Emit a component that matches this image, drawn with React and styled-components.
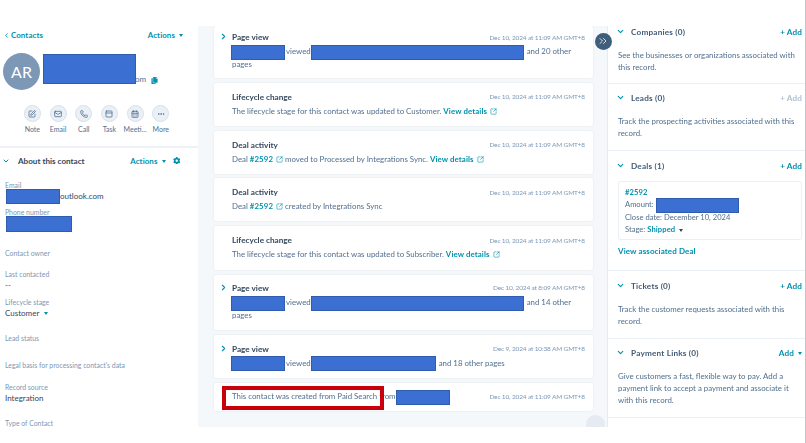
import React from "react";
import styled, { createGlobalStyle } from "styled-components";
import {
  ChevronDown,
  ChevronLeft,
  ChevronRight,
  ChevronsRight,
  SquarePen,
  Mail,
  Phone,
  PanelTop,
  CalendarDays,
  Ellipsis,
  SquareArrowOutUpRight,
} from "lucide-react";
import { FaCog, FaCopy } from "react-icons/fa";

const TEAL = "#0091ae";
const DARK = "#33475b";
const MUTED = "#516f90";
const FONT = `"Lato", "Open Sans", sans-serif`;

const GlobalStyle = createGlobalStyle`
  html, body { margin: 0; padding: 0; background: #fff; }
  body { font-family: ${FONT}; color: ${DARK}; }
  * { box-sizing: border-box; }
`;

const Page = styled.div`
  position: relative;
  width: 806px;
  height: 443px;
  padding-top: 26px;
  overflow: hidden;
  border-right: 1.5px solid #c4c6c9;
  filter: blur(0.4px);
`;

const Columns = styled.div`
  display: grid;
  grid-template-columns: 198px 409px 1fr;
  height: 401px;
  overflow: hidden;
`;

/* redaction boxes sit in the text flow */
const Redact = styled.span`
  display: inline-block;
  width: ${(p) => p.$w}px;
  height: ${(p) => p.$h || 15}px;
  margin: -3px ${(p) => p.$mr ?? 1}px -3px ${(p) => p.$ml ?? 0}px;
  vertical-align: middle;
  background: #3b6fd1;
  border: 1px solid #2f5cae;
`;

const Link = styled.a`
  color: ${TEAL};
  font-weight: 700;
  letter-spacing: 0.1px;
`;

const Caret = styled.span`
  display: inline-block;
  width: 0;
  height: 0;
  margin-left: ${(p) => p.$ml || 4}px;
  vertical-align: middle;
  border-left: 2.5px solid transparent;
  border-right: 2.5px solid transparent;
  border-top: 3px solid ${(p) => p.$color || TEAL};
`;

/* left column */
const Left = styled.aside`
  background: #fff;
  overflow: hidden;
`;

const TopRow = styled.div`
  display: flex;
  justify-content: space-between;
  align-items: center;
  height: 18px;
  padding: 0 15px 0 3px;
  font-size: 7.9px;
`;

const BackLink = styled(Link)`
  display: flex;
  align-items: center;
  gap: 1px;
`;

const Identity = styled.div`
  display: flex;
  align-items: flex-start;
  margin-top: 9px;
  padding-left: 3px;
`;

const Avatar = styled.div`
  display: flex;
  align-items: center;
  justify-content: center;
  width: 37px;
  height: 37px;
  border-radius: 50%;
  background: #7c98b6;
  color: #fff;
  font-size: 16px;
`;

const IdentityText = styled.div`
  display: flex;
  align-items: flex-end;
  height: 31px;
  margin-left: 3px;
  font-size: 8px;
  color: ${MUTED};
  svg { margin-left: 5px; color: ${TEAL}; }
`;

const NameRedact = styled(Redact)`
  width: 93px;
  height: 30px;
  margin: 0 -1px 0 0;
`;

const ActionRow = styled.div`
  display: flex;
  margin-top: 15px;
  padding-left: 19.5px;
  height: 36px;
`;

const ActionItem = styled.div`
  display: flex;
  flex-direction: column;
  align-items: center;
  width: 25.7px;
  font-size: 7px;
  color: ${MUTED};
  white-space: nowrap;
`;

const ActionCircle = styled.div`
  display: flex;
  align-items: center;
  justify-content: center;
  width: 17px;
  height: 17px;
  margin-bottom: 3px;
  border-radius: 50%;
  background: #eaf0f6;
  border: 0.5px solid #d6e0ea;
  color: ${MUTED};
`;

const Divider = styled.div`
  height: 2px;
  background: #eef2f7;
  margin-top: 5px;
  width: 198px;
`;

const SectionHead = styled.div`
  display: flex;
  align-items: center;
  height: 13px;
  margin-top: 6px;
  padding: 0 18px 0 2px;
  font-size: 8.1px;
  font-weight: 700;
  color: ${DARK};
`;

const HeadTitle = styled.span`
  margin-left: 8px;
  flex: 1;
`;

const HeadActions = styled(Link)`
  margin-right: 7px;
  font-size: 7.9px;
`;

const Fields = styled.div`
  padding: 0 5px;
`;

const Field = styled.div`
  margin-top: ${(p) => p.$mt}px;
`;

const Label = styled.div`
  height: 10px;
  line-height: 10px;
  font-size: 6.9px;
  color: #7c98b6;
  white-space: nowrap;
`;

const Value = styled.div`
  height: ${(p) => p.$h || 13}px;
  line-height: 13px;
  font-size: 8px;
  color: ${DARK};
  white-space: nowrap;
`;

/* timeline */
const Middle = styled.main`
  position: relative;
  display: flex;
  flex-direction: column;
  gap: 4.8px;
  padding: 0 14px 0 16px;
  background: #f5f8fa;
  overflow: hidden;
`;

const Card = styled.article`
  position: relative;
  flex: none;
  height: ${(p) => p.$h}px;
  padding: ${(p) => p.$top ?? 8}px 8px 0 18px;
  background: #fff;
  border-radius: 2px;
  box-shadow: 0 0 2px rgba(45, 62, 80, 0.12);
`;

const CardHead = styled.div`
  display: flex;
  justify-content: space-between;
  align-items: center;
  height: 12px;
  margin-bottom: 2px;
`;

const Expand = styled(ChevronRight)`
  position: absolute;
  left: 5px;
  top: ${(p) => p.$y}px;
  color: ${TEAL};
`;

const CardTitle = styled.h3`
  margin: 0;
  font-size: 8.2px;
  font-weight: 700;
  color: ${DARK};
`;

const Stamp = styled.time`
  font-size: 6.5px;
  letter-spacing: -0.15px;
  color: #7c98b6;
  white-space: nowrap;
`;

const CardBody = styled.p`
  margin: 0;
  width: 353px;
  font-size: 7.85px;
  line-height: 12.6px;
  color: ${MUTED};
`;

const Oneline = styled.div`
  display: flex;
  justify-content: space-between;
  align-items: center;
  height: 28px;
  font-size: 7.85px;
  color: ${MUTED};
`;

const RedBox = styled.div`
  position: absolute;
  left: 8px;
  top: 3px;
  width: 162px;
  height: 24px;
  border: 4px solid #c9000c;
`;

const OutIcon = styled(SquareArrowOutUpRight)`
  margin-left: 3px;
  vertical-align: -1px;
  color: ${TEAL};
`;

const Fab = styled.button`
  position: absolute;
  top: 32.5px;
  left: 594.5px;
  display: flex;
  align-items: center;
  justify-content: center;
  width: 17px;
  height: 17px;
  padding: 0;
  border: 0;
  border-radius: 50%;
  background: #3f5e7c;
  color: #fff;
`;

const Ghost = styled.div`
  position: absolute;
  right: 2px;
  bottom: -7px;
  width: 19px;
  height: 19px;
  border-radius: 50%;
  background: #e5eaf3;
`;

/* right column */
const Right = styled.aside`
  background: #fff;
  border-left: 1px solid #e6ebf1;
  overflow: hidden;
`;

const Panel = styled.section`
  height: ${(p) => p.$h}px;
  margin-top: ${(p) => p.$mt || 0}px;
  padding: ${(p) => p.$top ?? 7}px 3px 0 10px;
  border-bottom: 1.5px solid #eaf0f6;
`;

const PanelHead = styled.div`
  display: flex;
  align-items: center;
  height: 13px;
  margin-bottom: 10.5px;
  font-size: 8.2px;
  font-weight: 700;
  color: #425b76;
  svg { margin-left: -2px; color: ${TEAL}; }
`;

const PanelTitle = styled.span`
  flex: 1;
  margin-left: 6px;
  letter-spacing: 0.2px;
`;

const AddLink = styled(Link)`
  font-size: 8.2px;
  color: ${(p) => (p.$off ? "#b0c1d4" : TEAL)};
`;

const PanelText = styled.p`
  margin: 0;
  font-size: 7.85px;
  line-height: 12.4px;
  color: ${MUTED};
`;

const DealCard = styled.div`
  height: 59px;
  margin-top: -1.5px;
  padding: 4px 6px;
  border: 1px solid #eaf0f6;
  border-radius: 2px;
  font-size: 7.6px;
  line-height: 12.4px;
  color: ${MUTED};
  white-space: nowrap;
`;

const DealLink = styled(Link)`
  display: block;
  margin-top: 6px;
  font-size: 8px;
`;

const quickActions = [
  ["Note", SquarePen],
  ["Email", Mail],
  ["Call", Phone],
  ["Task", PanelTop],
  ["Meeti...", CalendarDays],
  ["More", Ellipsis],
];

const Stage = ({ time, title, h, top, chevron, children }) => (
  <Card $h={h} $top={top}>
    {chevron !== undefined && <Expand size={9} strokeWidth={3} $y={chevron} />}
    <CardHead>
      <CardTitle>{title}</CardTitle>
      <Stamp>{time}</Stamp>
    </CardHead>
    <CardBody>{children}</CardBody>
  </Card>
);

const Details = () => (
  <>
    <Link>View details</Link>
    <OutIcon size={7} strokeWidth={2} />
  </>
);

const PanelHeader = ({ title, add = "+ Add", off, children }) => (
  <PanelHead>
    <ChevronDown size={9} strokeWidth={3} />
    <PanelTitle>{title}</PanelTitle>
    {children || <AddLink $off={off}>{add}</AddLink>}
  </PanelHead>
);

export default function App() {
  const stamp = "Dec 10, 2024 at 11:09 AM GMT+8";
  return (
    <Page>
      <GlobalStyle />
      <Columns>
        <Left>
          <TopRow>
            <BackLink>
              <ChevronLeft size={7} strokeWidth={3} />
              Contacts
            </BackLink>
            <Link>
              Actions
              <Caret />
            </Link>
          </TopRow>
          <Identity>
            <Avatar>AR</Avatar>
            <IdentityText>
              <NameRedact as="span" />
              om
              <FaCopy size={7} />
            </IdentityText>
          </Identity>
          <ActionRow>
            {quickActions.map(([label, Icon]) => (
              <ActionItem key={label}>
                <ActionCircle>
                  <Icon size={8} strokeWidth={2.4} />
                </ActionCircle>
                {label}
              </ActionItem>
            ))}
          </ActionRow>
          <Divider />
          <SectionHead>
            <ChevronDown size={8} strokeWidth={3} color={TEAL} />
            <HeadTitle>About this contact</HeadTitle>
            <HeadActions>
              Actions
              <Caret />
            </HeadActions>
            <FaCog size={7.5} color={TEAL} />
          </SectionHead>
          <Fields>
            <Field $mt={13}>
              <Label>Email</Label>
              <Value $h={15}>
                <Redact $w={54} $ml={1} $mr={0} />
                outlook.com
              </Value>
            </Field>
            <Field $mt={2}>
              <Label>Phone number</Label>
              <Value $h={25}>
                <Redact $w={66} $h={16} $ml={1} />
              </Value>
            </Field>
            <Field $mt={6}>
              <Label>Contact owner</Label>
            </Field>
            <Field $mt={11}>
              <Label>Last contacted</Label>
              <Value>--</Value>
            </Field>
            <Field $mt={5}>
              <Label>Lifecycle stage</Label>
              <Value>
                Customer
                <Caret $ml={5} />
              </Value>
            </Field>
            <Field $mt={13}>
              <Label>Lead status</Label>
            </Field>
            <Field $mt={17}>
              <Label>Legal basis for processing contact's data</Label>
            </Field>
            <Field $mt={12}>
              <Label>Record source</Label>
              <Value>Integration</Value>
            </Field>
            <Field $mt={13}>
              <Label>Type of Contact</Label>
            </Field>
          </Fields>
        </Left>

        <Middle>
          <Stage title="Page view" time={stamp} h={52} top={5} chevron={6}>
            <Redact $w={54} $ml={-1} />
            viewed <Redact $w={213} $ml={-2} /> and 20 other
            <br />
            pages
          </Stage>
          <Stage title="Lifecycle change" time={stamp} h={43}>
            The lifecycle stage for this contact was updated to Customer. <Details />
          </Stage>
          <Stage title="Deal activity" time={stamp} h={43}>
            Deal <Link>#2592</Link>
            <OutIcon size={7} /> moved to Processed by Integrations Sync. <Details />
          </Stage>
          <Stage title="Deal activity" time={stamp} h={43}>
            Deal <Link>#2592</Link>
            <OutIcon size={7} /> created by Integrations Sync
          </Stage>
          <Stage title="Lifecycle change" time={stamp} h={44}>
            The lifecycle stage for this contact was updated to Subscriber. <Details />
          </Stage>
          <Stage
            title="Page view"
            time="Dec 10, 2024 at 8:09 AM GMT+8"
            h={55}
            top={7}
            chevron={8}
          >
            <Redact $w={54} $ml={-1} />
            viewed <Redact $w={213} $ml={-2} /> and 14 other
            <br />
            pages
          </Stage>
          <Stage
            title="Page view"
            time="Dec 9, 2024 at 10:38 AM GMT+8"
            h={43}
            top={8}
            chevron={9}
          >
            <Redact $w={54} $ml={-1} />
            viewed <Redact $w={125} $ml={-2} /> and 18 other pages
          </Stage>
          <Card $h={28.5} $top={0}>
            <Oneline>
              <span>
                This contact was created from Paid Search from
                <Redact $w={54} />
              </span>
              <Stamp>{stamp}</Stamp>
            </Oneline>
            <RedBox />
          </Card>
          <Ghost />
        </Middle>

        <Right>
          <Panel $h={59} $mt={-1} $top={0}>
            <PanelHeader title="Companies (0)" />
            <PanelText>
              See the businesses or organizations associated with this record.
            </PanelText>
          </Panel>
          <Panel $h={67} $top={7}>
            <PanelHeader title="Leads (0)" off />
            <PanelText>
              Track the prospecting activities associated with this record.
            </PanelText>
          </Panel>
          <Panel $h={120} $top={8}>
            <PanelHeader title="Deals (1)" />
            <DealCard>
              <Link>#2592</Link>
              <br />
              Amount: <Redact $w={83} />
              <br />
              Close date: December 10, 2024
              <br />
              Stage: <Link>Shipped</Link>
              <Caret $color={DARK} />
            </DealCard>
            <DealLink>View associated Deal</DealLink>
          </Panel>
          <Panel $h={68} $top={8}>
            <PanelHeader title="Tickets (0)" />
            <PanelText>
              Track the customer requests associated with this record.
            </PanelText>
          </Panel>
          <Panel $h={79} $top={7}>
            <PanelHeader title="Payment Links (0)">
              <AddLink>
                Add
                <Caret />
              </AddLink>
            </PanelHeader>
            <PanelText>
              Give customers a fast, flexible way to pay. Add a payment link to
              accept a payment and associate it with this record.
            </PanelText>
          </Panel>
        </Right>
      </Columns>
      <Fab>
        <ChevronsRight size={12} strokeWidth={1.6} />
      </Fab>
    </Page>
  );
}
